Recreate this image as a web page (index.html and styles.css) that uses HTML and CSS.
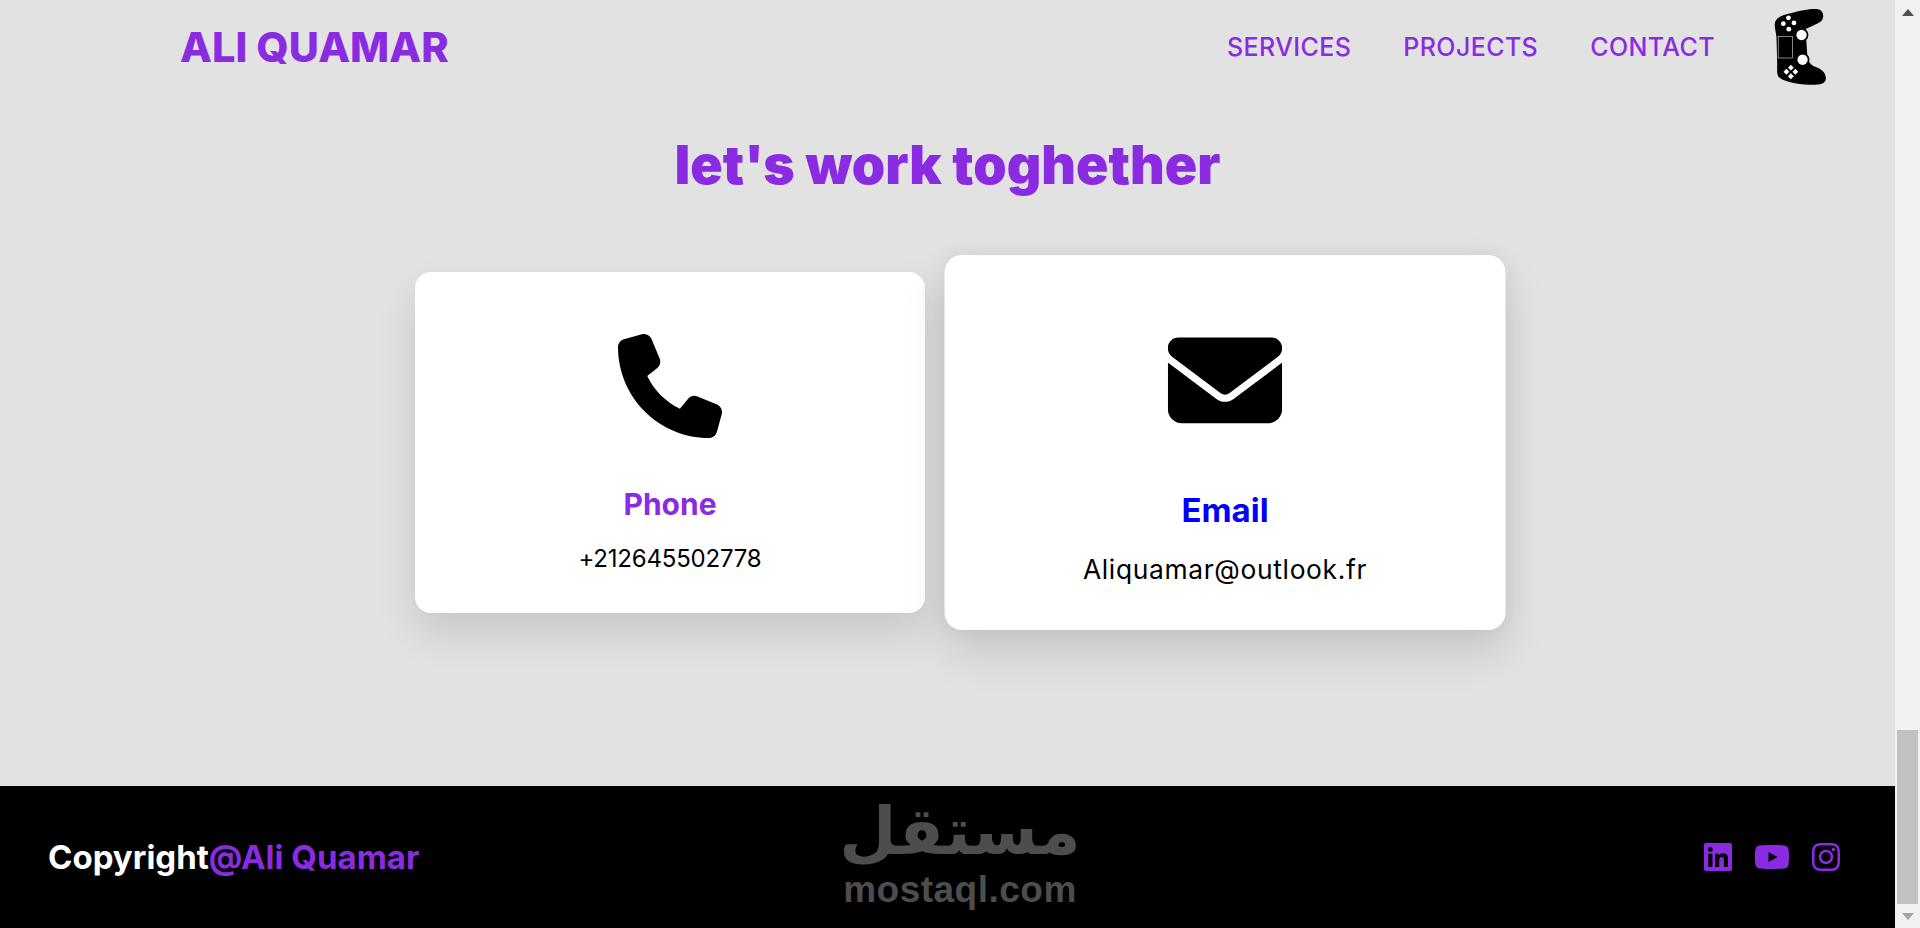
FILE: index.html
```html
<!DOCTYPE html>
<html lang="en">

<head>
    <meta charset="UTF-8">
    <title>Ali Quamar</title>
    <link rel="stylesheet" href="styles.css">
</head>

<body>
    <div class="window">
        <div class="site">
            <header class="navbar">
                <a class="logo" href="#">ALI QUAMAR</a>
                <nav class="nav-links">
                    <a href="#">SERVICES</a>
                    <a href="#">PROJECTS</a>
                    <a href="#">CONTACT</a>
                </nav>
                <!-- gamepad, turned on its side -->
                <svg class="gamepad" viewBox="100 24 160 232" aria-hidden="true">
                    <path d="M105 75C105 55 125 48 150 42C185 32 215 27 232 30C248 34 250 55 240 65C225 75 205 82 195 88L200 170C205 190 215 195 225 198C245 205 257 220 253 237C248 250 230 250 205 250C170 248 125 240 115 225C110 215 113 200 112 180L110 110C108 95 105 85 105 75Z" />
                    <circle cx="183" cy="105" r="20" />
                    <circle cx="186" cy="177" r="20" />
                    <g fill="#fff">
                        <circle cx="145" cy="55" r="7" />
                        <circle cx="130" cy="72" r="7" />
                        <circle cx="161" cy="70" r="7" />
                        <circle cx="146" cy="88" r="7" />
                        <circle cx="183" cy="105" r="15" />
                        <circle cx="186" cy="177" r="15" />
                        <rect x="146" y="194" width="12" height="12" transform="rotate(45 152 200)" />
                        <rect x="133" y="206" width="12" height="12" transform="rotate(45 139 212)" />
                        <rect x="159" y="206" width="12" height="12" transform="rotate(45 165 212)" />
                        <rect x="146" y="219" width="12" height="12" transform="rotate(45 152 225)" />
                    </g>
                    <rect class="touchpad" x="115" y="110" width="42" height="62" />
                </svg>
            </header>

            <main class="contact">
                <h2>let's work toghether</h2>
                <div class="cards">
                    <div class="card">
                        <svg class="card-icon" viewBox="0 0 512 512" aria-hidden="true">
                            <path d="M164.9 24.6c-7.7-18.6-28-28.5-47.4-23.2l-88 24C12.1 30.2 0 46 0 64C0 311.4 200.6 512 448 512c18 0 33.8-12.1 38.6-29.5l24-88c5.3-19.4-4.6-39.7-23.2-47.4l-96-40c-16.3-6.8-35.2-2.1-46.3 11.6L304.7 368C234.3 334.7 177.3 277.7 144 207.3L193.3 167c13.7-11.2 18.4-30 11.6-46.3l-40-96z" />
                        </svg>
                        <h3>Phone</h3>
                        <p>+212645502778</p>
                    </div>
                    <div class="card card-hover">
                        <svg class="card-icon" viewBox="0 0 512 512" aria-hidden="true">
                            <path d="M48 64C21.5 64 0 85.5 0 112c0 15.1 7.1 29.3 19.2 38.4L236.8 313.6c11.4 8.5 27 8.5 38.4 0L492.8 150.4c12.1-9.1 19.2-23.3 19.2-38.4c0-26.5-21.5-48-48-48H48zM0 176V384c0 35.3 28.7 64 64 64H448c35.3 0 64-28.7 64-64V176L294.4 339.2c-22.8 17.1-54 17.1-76.8 0L0 176z" />
                        </svg>
                        <h3>Email</h3>
                        <p>Aliquamar@outlook.fr</p>
                    </div>
                </div>
            </main>

            <footer class="footer">
                <p class="copyright">Copyright<span>@Ali Quamar</span></p>
                <div class="socials">
                    <svg class="social-square" viewBox="0 0 448 512" aria-label="LinkedIn">
                        <path d="M416 32H31.9C14.3 32 0 46.5 0 64.3v383.4C0 465.5 14.3 480 31.9 480H416c17.6 0 32-14.5 32-32.3V64.3c0-17.8-14.4-32.3-32-32.3zM135.4 416H69V202.2h66.5V416zm-33.2-243c-21.3 0-38.5-17.3-38.5-38.5S80.9 96 102.2 96c21.2 0 38.5 17.3 38.5 38.5 0 21.3-17.2 38.5-38.5 38.5zm282.1 243h-66.4V312c0-24.8-.5-56.7-34.5-56.7-34.6 0-39.9 27-39.9 54.9V416h-66.4V202.2h63.7v29.2h.9c8.9-16.8 30.6-34.5 62.9-34.5 67.2 0 79.7 44.3 79.7 101.9V416z" />
                    </svg>
                    <svg class="social-wide" viewBox="0 0 576 512" aria-label="YouTube">
                        <path d="M549.655 124.083c-6.281-23.65-24.787-42.276-48.284-48.597C458.781 64 288 64 288 64S117.22 64 74.629 75.486c-23.497 6.322-42.003 24.947-48.284 48.597-11.412 42.867-11.412 132.305-11.412 132.305s0 89.438 11.412 132.305c6.281 23.65 24.787 41.5 48.284 47.821C117.22 448 288 448 288 448s170.78 0 213.371-11.486c23.497-6.321 42.003-24.171 48.284-47.821 11.412-42.867 11.412-132.305 11.412-132.305s0-89.438-11.412-132.305zm-317.51 213.508V175.185l142.739 81.205-142.739 81.201z" />
                    </svg>
                    <svg class="social-square" viewBox="0 0 448 512" aria-label="Instagram">
                        <path d="M224.1 141c-63.6 0-114.9 51.3-114.9 114.9s51.3 114.9 114.9 114.9S339 319.5 339 255.9 287.7 141 224.1 141zm0 189.6c-41.1 0-74.7-33.5-74.7-74.7s33.5-74.7 74.7-74.7 74.7 33.5 74.7 74.7-33.6 74.7-74.7 74.7zm146.4-194.3c0 14.9-12 26.8-26.8 26.8-14.9 0-26.8-12-26.8-26.8s12-26.8 26.8-26.8 26.8 12 26.8 26.8zm76.1 27.2c-1.7-35.9-9.9-67.7-36.2-93.9-26.2-26.2-58-34.4-93.9-36.2-37-2.1-147.9-2.1-184.9 0-35.8 1.7-67.6 9.9-93.9 36.1s-34.4 58-36.2 93.9c-2.1 37-2.1 147.9 0 184.9 1.7 35.9 9.9 67.7 36.2 93.9s58 34.4 93.9 36.2c37 2.1 147.9 2.1 184.9 0 35.9-1.7 67.7-9.9 93.9-36.2 26.2-26.2 34.4-58 36.2-93.9 2.1-37 2.1-147.8 0-184.8zM398.8 388c-7.8 19.6-22.9 34.7-42.6 42.6-29.5 11.7-99.5 9-132.1 9s-102.7 2.6-132.1-9c-19.6-7.8-34.7-22.9-42.6-42.6-11.7-29.5-9-99.5-9-132.1s-2.6-102.7 9-132.1c7.8-19.6 22.9-34.7 42.6-42.6 29.5-11.7 99.5-9 132.1-9s102.7-2.6 132.1 9c19.6 7.8 34.7 22.9 42.6 42.6 11.7 29.5 9 99.5 9 132.1s2.7 102.7-9 132.1z" />
                    </svg>
                </div>
                <!-- site watermark, lies over the footer -->
                <div class="watermark">
                    <span class="watermark-ar" lang="ar" dir="rtl">مستقل</span>
                    <span class="watermark-en">mostaql.com</span>
                </div>
            </footer>
        </div>

        <!-- browser scrollbar as in the screenshot -->
        <div class="scrollbar">
            <span class="arrow-up"></span>
            <span class="thumb"></span>
            <span class="arrow-down"></span>
        </div>
    </div>
</body>

</html>
```

FILE: styles.css
```css
:root {
    --bg: #e2e2e2;
    --purple: #8a2be2;
    --blue: #0000ff;
}

* {
    box-sizing: border-box;
}

html,
body {
    margin: 0;
    padding: 0;
    overflow: hidden;
}

body {
    font-family: Inter, "Liberation Sans", sans-serif;
    background-color: var(--bg);
}

a {
    text-decoration: none;
    color: var(--purple);
}

.window {
    display: flex;
    height: 928px;
}

.site {
    flex: 1;
    display: flex;
    flex-direction: column;
}

/* navbar */
.navbar {
    display: flex;
    align-items: center;
    height: 94px;
    padding: 0 67px 0 180px;
}

.logo {
    font-size: 41.5px;
    font-weight: 800;
    margin-right: auto;
}

.nav-links {
    display: flex;
    gap: 52px;
    margin-right: 58px;
}

.nav-links a {
    font-size: 25px;
    font-weight: 500;
    letter-spacing: 0.4px;
}

.gamepad {
    width: 55px;
    height: 80px;
}

.touchpad {
    fill: none;
    stroke: #fff;
    stroke-width: 1.5;
}

/* contact */
.contact {
    flex: 1;
}

.contact h2 {
    margin: 36px 0 72px;
    text-align: center;
    font-size: 53.5px;
    line-height: 70px;
    font-weight: 900;
    color: var(--purple);
}

.cards {
    display: flex;
    justify-content: center;
    gap: 45px;
}

.card {
    width: 510px;
    height: 341px;
    padding-top: 62px;
    background-color: #fff;
    border-radius: 16px;
    box-shadow: 0 20px 40px rgba(0, 0, 0, 0.12);
    text-align: center;
}

.card-icon {
    display: block;
    width: 104px;
    height: 104px;
    margin: 0 auto;
}

.card h3 {
    margin: 48px 0 0;
    font-size: 30px;
    line-height: 36px;
    font-weight: 700;
    color: var(--purple);
}

.card p {
    margin: 21px 0 0;
    font-size: 24px;
    line-height: 32px;
    letter-spacing: -0.2px;
    color: #000;
}

.card-hover {
    transform: scale(1.1);
    box-shadow: 0 20px 40px rgba(0, 0, 0, 0.12), 0 0 20px rgba(0, 0, 0, 0.05);
}

.card-hover h3 {
    color: var(--blue);
}

.card-hover p {
    letter-spacing: 0.6px;
}

/* footer */
.footer {
    position: relative;
    display: flex;
    align-items: center;
    justify-content: space-between;
    height: 142px;
    padding: 0 55px 0 48px;
    background-color: #000;
}

.copyright {
    margin: 0;
    font-size: 33px;
    font-weight: 700;
    color: #fff;
}

.copyright span {
    color: var(--purple);
}

.socials {
    display: flex;
    gap: 22px;
    fill: var(--purple);
}

.social-square {
    width: 28px;
    height: 32px;
}

.social-wide {
    width: 36px;
    height: 32px;
}

.watermark {
    position: absolute;
    left: 845px;
    top: 6px;
    width: 230px;
    display: flex;
    flex-direction: column;
    align-items: center;
    color: #4d4d4d;
}

.watermark-ar {
    font-family: "DejaVu Sans", sans-serif;
    font-size: 66px;
    font-weight: 700;
    line-height: 80px;
}

.watermark-en {
    font-family: "Liberation Sans", sans-serif;
    font-size: 37px;
    font-weight: 700;
    line-height: 36px;
    letter-spacing: 0.5px;
}

/* scrollbar */
.scrollbar {
    width: 25px;
    height: 928px;
    display: flex;
    flex-direction: column;
    align-items: center;
    background-color: #f1f1f1;
}

.arrow-up {
    margin-top: 9px;
    border-left: 6px solid transparent;
    border-right: 6px solid transparent;
    border-bottom: 7px solid #505050;
}

.thumb {
    width: 21px;
    height: 174px;
    margin-top: auto;
    background-color: #c1c1c1;
}

.arrow-down {
    margin: 9px 0 8px;
    border-left: 6px solid transparent;
    border-right: 6px solid transparent;
    border-top: 7px solid #a3a3a3;
}
```
